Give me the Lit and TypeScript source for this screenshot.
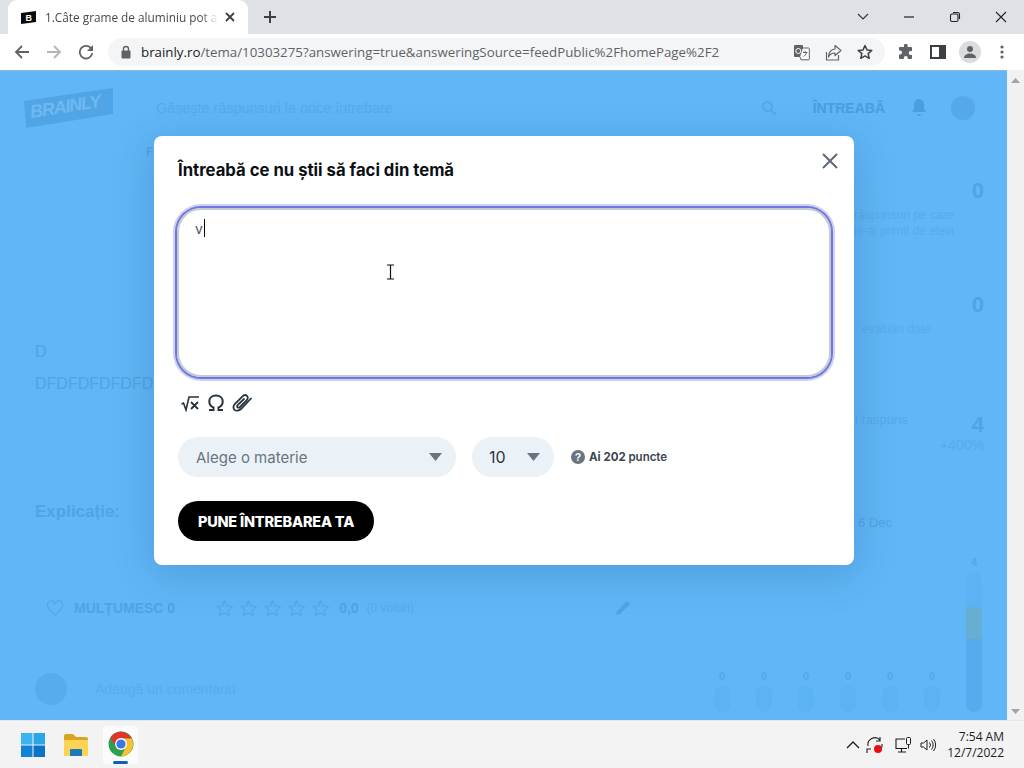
import { LitElement, html, css, svg } from "lit";
import { customElement } from "lit/decorators.js";

const chartCols = [
  { v: "0", h: 26, l: "Ma" },
  { v: "0", h: 26, l: "Jo" },
  { v: "0", h: 26, l: "Vi" },
  { v: "0", h: 26, l: "Sâ" },
  { v: "0", h: 26, l: "Du" },
  { v: "0", h: 26, l: "Lu" },
  { v: "4", h: 140, l: "Ma" },
];

const star = svg`<path d="M8 1l2.1 4.6 5 .6-3.7 3.4 1 5L8 12.1 3.600 14.600l1-5L.9 6.200l5-.6z" fill="none" stroke="currentColor" stroke-width="1.300"/>`;

@customElement("app-root")
export class AppRoot extends LitElement {
  static styles = css`
    :host { display: flex; flex-direction: column; width: 1024px; height: 768px; overflow: hidden; font-family: "Open Sans", "Liberation Sans", sans-serif; background: #fff; }
    svg { display: block; flex: none; }

    .strip { height: 34px; background: #dee1e6; display: flex; align-items: center; padding-left: 8px; flex: none; }
    .tab { width: 240px; height: 34px; background: #fff; border-radius: 9px 9px 0 0; display: flex; align-items: center; padding-left: 13px; box-sizing: border-box; flex: none; }
    .tabtitle { width: 173px; margin-left: 9px; font-size: 11.800px; color: #45494e; white-space: nowrap; overflow: hidden; -webkit-mask-image: linear-gradient(90deg, #000 90%, transparent); mask-image: linear-gradient(90deg, #000 90%, transparent); }
    .tabx { margin-left: 7px; }
    .newtab { margin-left: 15px; }
    .winctl { margin-left: auto; display: flex; align-items: center; margin-right: 17px; gap: 34px; }

    .bar { height: 36px; background: #fff; display: flex; align-items: center; padding-left: 14px; flex: none; }
    .nav { display: flex; align-items: center; gap: 16px; }
    .omni { margin-left: 14px; width: 777px; height: 28px; background: #f4f5f7; border-radius: 14px; display: flex; align-items: center; padding-left: 12px; box-sizing: border-box; flex: none; }
    .url { margin-left: 9px; font-size: 13.300px; color: #202124; white-space: nowrap; }
    .url span { color: #5f6368; }
    .omniicons { margin-left: auto; margin-right: 12px; display: flex; gap: 15px; align-items: center; }
    .tools { display: flex; align-items: center; margin-left: 13px; gap: 14px; }
    .panel { margin-left: 2px; }
    .userav { width: 22px; height: 22px; border-radius: 50%; background: #dadce0; display: flex; align-items: center; justify-content: center; margin-left: -1px; }
    .dots { margin-left: 5px; }

    .main { flex: 1; display: flex; min-height: 0; }
    .page { position: relative; flex: 1; background: #60b6f6; overflow: hidden; color: #4fa4e4; font-family: "Liberation Sans", sans-serif; border-top: 1px solid #8fb8d8; box-sizing: border-box; }
    .scroll { width: 17px; background: #f1f1f1; display: flex; flex-direction: column; justify-content: space-between; align-items: center; padding: 8px 0 6px; box-sizing: border-box; }

    .top { height: 73px; display: flex; align-items: center; padding-left: 24px; }
    .search { margin-left: 42px; font-size: 14.400px; color: #57abea; }
    .topright { margin-left: auto; display: flex; align-items: center; margin-right: 32px; }
    .ask { margin-left: 36px; font-size: 14px; font-weight: 700; color: #4a9edd; }
    .bell { margin-left: 26px; }
    .av { width: 24px; height: 24px; border-radius: 50%; background: #55a9ea; margin-left: 24px; }
    .sub { height: 16px; line-height: 16px; padding-left: 146px; font-size: 12px; font-weight: 700; }
    .cols { display: grid; grid-template-columns: 640px minmax(0, 1fr); }
    .left { padding-left: 35px; }
    .line { height: 32px; line-height: 32px; font-size: 16px; white-space: nowrap; }
    .line.first { margin-top: 176px; }
    .expl { margin-top: 100px; height: 24px; line-height: 24px; font-size: 17px; font-weight: 700; }
    .likes { margin-top: 72px; height: 24px; display: flex; align-items: center; padding-left: 11px; }
    .likes b { margin-left: 10px; font-size: 14px; }
    .stars { margin-left: 41px; display: flex; gap: 7px; color: #55a9e8; }
    .rate { margin-left: 10px; font-size: 14px; font-weight: 700; }
    .rate2 { margin-left: 8px; font-size: 12px; color: #57abe9; }
    .pencil { margin-left: auto; margin-right: 8px; }
    .comment { margin-top: 53px; height: 32px; display: flex; align-items: center; }
    .cav { width: 32px; height: 32px; border-radius: 50%; background: #57acec; }
    .ph { margin-left: 28px; font-size: 14px; color: #58acec; }

    .right { position: relative; padding-right: 23px; }
    .big { margin-top: 54px; height: 24px; line-height: 24px; text-align: right; font-size: 22px; font-weight: 700; }
    .big.f { margin-top: 19px; }
    .small { margin-top: 4px; padding-left: 214px; font-size: 12px; line-height: 16px; color: #58ace9; white-space: nowrap; }
    .small.ev { padding-left: 222px; }
    .statrow { margin-top: 76px; display: flex; justify-content: space-between; align-items: flex-end; height: 24px; padding-left: 215px; }
    .statrow span { font-size: 13px; line-height: 16px; margin-bottom: 9px; color: #55a9e6; }
    .statrow b { font-size: 22px; line-height: 24px; }
    .pct { margin-top: 0; text-align: right; font-size: 14px; line-height: 16px; color: #57abe8; }
    .date { margin-top: 62px; padding-left: 218px; font-size: 13px; line-height: 16px; }
    .chart { margin: 25px 0 0 61px; display: grid; grid-template-columns: repeat(7, 42px); height: 175px; align-items: end; justify-items: center; }
    .chartcol { display: flex; flex-direction: column; align-items: center; }
    .val { font-size: 11px; line-height: 12px; font-weight: 700; margin-bottom: 4px; color: #54a8e6; }
    .barv { width: 16px; background: #5cb3f3; border-radius: 8px; margin-bottom: 6px; }
    .barv.tall { background: linear-gradient(#5cb3f4 0 25%, #66aed2 25% 48%, #55abee 48%); }
    .lab { font-size: 11px; line-height: 14px; color: #55a9e6; }

    .modal { position: absolute; left: 154px; top: 65px; width: 700px; height: 429px; background: #fff; border-radius: 8px; box-shadow: 0 8px 40px rgba(20, 70, 120, .22); padding: 24px; box-sizing: border-box; font-family: Inter, "Liberation Sans", sans-serif; color: #000; }
    .mhead { display: flex; align-items: center; justify-content: space-between; height: 20px; }
    .mtitle { font-size: 16.700px; font-weight: 700; color: #0c1014; white-space: nowrap; }
    .mclose { margin-right: -8px; margin-top: -19px; }
    .ta { margin-top: 28px; margin-left: -1px; height: 169px; width: 654px; box-sizing: border-box; border: 2px solid #c3cbd1; border-radius: 24px; box-shadow: 0 0 0 2px #6f77de, 0 0 0 4px #cdd1f6; padding: 9px 16px; display: flex; align-items: flex-start; position: relative; }
    .typed { font-size: 14px; line-height: 20px; color: #4b5560; }
    .caret { width: 1px; height: 18px; background: #000; margin-left: 1px; }
    .ibeam { position: absolute; left: 207px; top: 54px; }
    .rte { margin-top: 16px; display: flex; align-items: center; gap: 8px; margin-left: 3px; height: 20px; }
    .form { margin-top: 24px; display: flex; align-items: center; height: 40px; }
    .sel { height: 40px; border-radius: 20px; background: #ebf2f7; display: flex; align-items: center; justify-content: space-between; box-sizing: border-box; padding: 0 14px 0 18px; font-size: 15px; color: #687480; }
    .sel.a { width: 278px; }
    .sel.b { width: 82px; margin-left: 16px; color: #2c3640; font-size: 16px; padding-left: 17px; }
    .help { margin-left: 17px; }
    .pts { margin-left: 4px; font-size: 11.500px; font-weight: 700; color: #3c454e; }
    .pts span { font-weight: 600; }
    .cta { margin-top: 24px; width: 196px; height: 40px; border-radius: 20px; background: #000; color: #fff; font-size: 14.500px; font-weight: 800; border: 0; padding: 0; font-family: inherit; display: block; letter-spacing: -.2px; white-space: nowrap; }

    .task { height: 48px; background: #f3f3f3; border-top: 1px solid #e6e7e8; box-sizing: border-box; display: flex; align-items: center; padding-left: 21px; flex: none; }
    .folder { margin-left: 19px; }
    .tile { margin-left: 15px; width: 35px; height: 38px; background: #fbfbfb; border-radius: 4px; display: flex; flex-direction: column; align-items: center; padding-top: 5px; box-sizing: border-box; position: relative; }
    .ind { width: 15px; height: 3px; border-radius: 2px; background: #0f62b0; margin-top: 4px; }
    .tray { margin-left: auto; display: flex; align-items: center; margin-right: 20px; }
    .sync { margin-left: 6px; }
    .net { margin-left: 11px; }
    .vol { margin-left: 8px; }
    .clock { margin-left: 10px; text-align: right; font-size: 12px; line-height: 16px; color: #1d1d1d; white-space: nowrap; }
  `;

  private chrome() {
    return html`<svg width="26" height="26" viewBox="0 0 48 48">
      <circle cx="24" cy="24" r="23" fill="#2e9e4f"/>
      <path d="M24 14L44 13.500A23 23 0 0 0 4.500 12L15 29z" fill="#e0362c"/>
      <path d="M24 14H44A23 23 0 0 1 24 47L33 29z" fill="#fbc02d"/>
      <circle cx="24" cy="24" r="11" fill="#fff"/><circle cx="24" cy="24" r="8.500" fill="#3a76e8"/>
    </svg>`;
  }

  render() {
    return html`
      <div class="strip">
        <div class="tab">
          <svg width="15" height="13" viewBox="0 0 15 13"><path d="M0 2L15 0v11L0 13z" fill="#0b0b0b"/><text x="4.500" y="10" font-size="9" font-weight="700" fill="#fff" font-family="Liberation Sans">B</text></svg>
          <div class="tabtitle">1.Câte grame de aluminiu pot arde</div>
          <svg class="tabx" width="10" height="10" viewBox="0 0 10 10"><path d="M1 1l8 8M9 1l-8 8" stroke="#3c4043" stroke-width="1.800"/></svg>
        </div>
        <svg class="newtab" width="14" height="14" viewBox="0 0 14 14"><path d="M7 1v12M1 7h12" stroke="#3c4043" stroke-width="2"/></svg>
        <div class="winctl">
          <svg width="12" height="8" viewBox="0 0 12 8"><path d="M1 1l5 5 5-5" fill="none" stroke="#333" stroke-width="1.100"/></svg>
          <svg width="12" height="12" viewBox="0 0 12 12"><path d="M1 6h10" stroke="#222" stroke-width="1.200"/></svg>
          <svg width="12" height="12" viewBox="0 0 12 12"><rect x="1.500" y="3" width="7.500" height="7.500" rx="1.500" fill="none" stroke="#222" stroke-width="1.100"/><path d="M4 1.500h4.500a2 2 0 0 1 2 2V8" fill="none" stroke="#222" stroke-width="1.100"/></svg>
          <svg width="12" height="12" viewBox="0 0 12 12"><path d="M1 1l10 10M11 1L1 11" stroke="#222" stroke-width="1.100"/></svg>
        </div>
      </div>

      <div class="bar">
        <div class="nav">
          <svg width="16" height="16" viewBox="0 0 16 16"><path d="M15 8H2M8 2L2 8l6 6" fill="none" stroke="#5f6368" stroke-width="1.800"/></svg>
          <svg width="16" height="16" viewBox="0 0 16 16"><path d="M1 8h13M8 2l6 6-6 6" fill="none" stroke="#b3b6ba" stroke-width="1.800"/></svg>
          <svg width="16" height="16" viewBox="0 0 16 16"><path d="M13.500 5A6.300 6.300 0 1 0 14.300 9" fill="none" stroke="#5f6368" stroke-width="1.800"/><path d="M15 1v6H9z" fill="#5f6368"/></svg>
        </div>
        <div class="omni">
          <svg width="12" height="14" viewBox="0 0 12 14"><path d="M3.500 6V4a2.500 2.500 0 0 1 5 0v2" fill="none" stroke="#5f6368" stroke-width="1.400"/><rect x="1.500" y="5.500" width="9" height="8" rx="1" fill="#5f6368"/></svg>
          <div class="url">brainly.ro<span>/tema/10303275?answering=true&answeringSource=feedPublic%2FhomePage%2F2</span></div>
          <div class="omniicons">
            <svg width="17" height="17" viewBox="0 0 17 17"><rect x="1" y="1" width="9" height="12" rx="1" fill="#5f6368"/><path d="M10 4h5.500a.8.8 0 0 1 .8.800V15a.8.8 0 0 1-.8.8H8L7 13" fill="#fff" stroke="#5f6368"/><circle cx="5.300" cy="7" r="2.500" fill="none" stroke="#fff"/><path d="M10 8.500h4.500M12.200 7v1.500M13.500 8.500c-.5 2-2 3.500-3 4" fill="none" stroke="#5f6368"/></svg>
            <svg width="17" height="17" viewBox="0 0 17 17"><path d="M1.500 8v8h12v-5" fill="none" stroke="#5f6368" stroke-width="1.200"/><path d="M10 1.500l6 5-6 5V9C7 9 5 10 3.500 13c.3-4.500 2.500-7.500 6.500-8z" fill="none" stroke="#5f6368" stroke-width="1.200" stroke-linejoin="round"/></svg>
            <svg width="16" height="16" viewBox="0 0 16 16"><path d="M8 1.500l2 4.400 4.800.5-3.600 3.200 1 4.700L8 11.900l-4.200 2.400 1-4.700L1.200 6.400 6 5.900z" fill="none" stroke="#3c4043" stroke-width="1.500" stroke-linejoin="round"/></svg>
          </div>
        </div>
        <div class="tools">
          <svg width="16" height="16" viewBox="0 0 16 16"><path d="M6 1.500a1.800 1.800 0 0 1 3.600 0V3h3.400a1 1 0 0 1 1 1v3h-1.300a2 2 0 0 0 0 4H14v3a1 1 0 0 1-1 1H9.800v-1a2 2 0 0 0-4 0v1H2a1 1 0 0 1-1-1v-3.500h1a2 2 0 0 0 0-4H1V4a1 1 0 0 1 1-1h4z" fill="#5f6368"/></svg>
          <svg class="panel" width="16" height="14" viewBox="0 0 16 14"><rect x="1" y="1" width="14" height="12" fill="none" stroke="#3c4043" stroke-width="2"/><rect x="9" y="1" width="6" height="12" fill="#3c4043"/></svg>
          <div class="userav"><svg width="14" height="14" viewBox="0 0 14 14"><circle cx="7" cy="4" r="3" fill="#5f6368"/><path d="M1 13c0-3 3-4.500 6-4.500s6 1.500 6 4.500z" fill="#5f6368"/></svg></div>
          <svg class="dots" width="4" height="14" viewBox="0 0 4 14"><circle cx="2" cy="2" r="1.600" fill="#5f6368"/><circle cx="2" cy="7" r="1.600" fill="#5f6368"/><circle cx="2" cy="12" r="1.600" fill="#5f6368"/></svg>
        </div>
      </div>

      <div class="main">
        <div class="page">
          <div class="top">
            <svg width="90" height="40" viewBox="0 0 90 40"><path d="M0 13L89 0l0 26L2 40z" fill="#50a5e6"/><text x="7" y="30" transform="rotate(-9 7 30)" font-size="18" font-weight="700" font-style="italic" fill="#6fb9f1" font-family="Liberation Sans" textLength="72">BRAINLY</text></svg>
            <div class="search">Găsește răspunsuri la orice întrebare</div>
            <div class="topright">
              <svg width="16" height="16" viewBox="0 0 16 16"><circle cx="6.500" cy="6.500" r="4.500" fill="none" stroke="#55a9e8" stroke-width="2"/><path d="M10 10l4.500 4.500" stroke="#55a9e8" stroke-width="2"/></svg>
              <div class="ask">ÎNTREABĂ</div>
              <svg class="bell" width="16" height="20" viewBox="0 0 16 20"><path d="M8 1c3.500 0 5 3 5 6v4l2 3H1l2-3V7c0-3 1.500-6 5-6z" fill="#4a9edd"/><path d="M6 16h4a2 2 0 0 1-4 0z" fill="#4a9edd"/></svg>
              <div class="av"></div>
            </div>
          </div>
          <div class="sub">F</div>
          <div class="cols">
            <div class="left">
              <div class="line first">D</div>
              <div class="line">DFDFDFDFDFDFDFDF</div>
              <div class="expl">Explicație:</div>
              <div class="likes">
                <svg width="18" height="18" viewBox="0 0 18 18"><path d="M9 16C4 12 1.500 9.500 1.500 6.300A3.800 3.800 0 0 1 9 5a3.800 3.800 0 0 1 7.500 1.300C16.500 9.500 14 12 9 16z" fill="none" stroke="#55a9e8" stroke-width="1.500"/></svg>
                <b>MULȚUMESC 0</b>
                <div class="stars">
                  ${[0, 1, 2, 3, 4].map(() => html`<svg width="17" height="17" viewBox="0 0 16 16">${star}</svg>`)}
                </div>
                <div class="rate">0,0</div><div class="rate2">(0 voturi)</div>
                <svg class="pencil" width="18" height="18" viewBox="0 0 18 18"><path d="M2 16l1-4L13 2l3 3L6 15z" fill="#4fa4e4"/></svg>
              </div>
              <div class="comment"><div class="cav"></div><div class="ph">Adaugă un comentariu</div></div>
            </div>
            <div class="right">
              <div class="big f">0</div>
              <div class="small">răspunsuri pe care<br />le-ai primit de elevi</div>
              <div class="big">0</div>
              <div class="small ev">evaluări date</div>
              <div class="statrow"><span>l raspuns</span><b>4</b></div>
              <div class="pct">+400%</div>
              <div class="date">6 Dec</div>
              <div class="chart">
                ${chartCols.map(
                  (c) => html`<div class="chartcol">
                    <div class="val">${c.v}</div>
                    <div class="barv ${c.h > 100 ? "tall" : ""}" style="height:${c.h}px"></div>
                    <div class="lab">${c.l}</div>
                  </div>`
                )}
              </div>
            </div>
          </div>

          <div class="modal">
            <div class="mhead">
              <div class="mtitle">Întreabă ce nu știi să faci din temă</div>
              <svg class="mclose" width="16" height="16" viewBox="0 0 16 16"><path d="M1 1l14 14M15 1L1 15" stroke="#5d6a75" stroke-width="2"/></svg>
            </div>
            <div class="ta">
              <span class="typed">v</span><span class="caret"></span>
              <svg class="ibeam" width="9" height="16" viewBox="0 0 9 16"><path d="M1 1h7M1 15h7M4.500 1v14" fill="none" stroke="#111" stroke-width="1.200"/></svg>
            </div>
            <div class="rte">
              <svg width="19" height="18" viewBox="0 0 19 18"><path d="M0.500 10l2-1 2.500 7L8 3h10" fill="none" stroke="#29333d" stroke-width="1.600"/><path d="M10 8l7 7M17 8l-7 7" stroke="#29333d" stroke-width="1.800"/></svg>
              <svg width="16" height="18" viewBox="0 0 16 18"><path d="M1 16h4.500v-2.500C3 12.500 1.300 10.300 1.300 7.500 1.300 4 4 1.500 8 1.500s6.700 2.500 6.700 6c0 2.800-1.700 5-4.200 6V16H15" fill="none" stroke="#29333d" stroke-width="2"/></svg>
              <svg width="21" height="19" viewBox="0 0 21 19"><path d="M19 4.500L9 15c-2 2-5 2.200-6.500.8S1 11.800 3 9.800L10.500 2.300c1.500-1.500 3.300-1.600 4.500-.5s1.100 3-.4 4.500L8 13c-.8.800-1.900.9-2.500.3s-.5-1.700.3-2.500L12 5" fill="none" stroke="#29333d" stroke-width="1.800" stroke-linecap="round"/></svg>
            </div>
            <div class="form">
              <div class="sel a">Alege o materie
                <svg width="13" height="8" viewBox="0 0 13 8"><path d="M0 0h13L6.500 8z" fill="#687480"/></svg>
              </div>
              <div class="sel b">10
                <svg width="13" height="8" viewBox="0 0 13 8"><path d="M0 0h13L6.500 8z" fill="#687480"/></svg>
              </div>
              <svg class="help" width="14" height="14" viewBox="0 0 14 14"><circle cx="7" cy="7" r="7" fill="#687480"/><text x="7" y="11" text-anchor="middle" font-size="10.500" font-weight="700" fill="#fff" font-family="Liberation Sans">?</text></svg>
              <div class="pts">Ai 202 <span>puncte</span></div>
            </div>
            <button class="cta">PUNE ÎNTREBAREA TA</button>
          </div>
        </div>
        <div class="scroll">
          <svg width="9" height="5" viewBox="0 0 9 5"><path d="M0 5l4.500-5L9 5z" fill="#a3a3a3"/></svg>
          <svg width="9" height="5" viewBox="0 0 9 5"><path d="M0 0l4.500 5L9 0z" fill="#a3a3a3"/></svg>
        </div>
      </div>

      <div class="task">
        <svg width="24" height="24" viewBox="0 0 24 24">
          <rect x="0" y="0" width="11.500" height="11.500" fill="#3cb4ee"/><rect x="12.500" y="0" width="11.500" height="11.500" fill="#2aa6e8"/>
          <rect x="0" y="12.500" width="11.500" height="11.500" fill="#0f83d8"/><rect x="12.500" y="12.500" width="11.500" height="11.500" fill="#0a72c8"/>
        </svg>
        <svg class="folder" width="24" height="22" viewBox="0 0 24 22">
          <path d="M0 2a2 2 0 0 1 2-2h7l3 3h10a2 2 0 0 1 2 2v15a2 2 0 0 1-2 2H2a2 2 0 0 1-2-2z" fill="#d8a520"/>
          <path d="M0 6h24v14a2 2 0 0 1-2 2H2a2 2 0 0 1-2-2z" fill="#fcd353"/>
          <path d="M7 15h10a1 1 0 0 1 1 1v6H6v-6a1 1 0 0 1 1-1z" fill="#1f78b8"/>
        </svg>
        <div class="tile">${this.chrome()}<div class="ind"></div></div>
        <div class="tray">
          <svg width="14" height="8" viewBox="0 0 14 8"><path d="M1 7l6-6 6 6" fill="none" stroke="#1d1d1d" stroke-width="1.300"/></svg>
          <svg class="sync" width="18" height="18" viewBox="0 0 18 18"><path d="M2 10a7 7 0 0 1 12-6M16 8a7 7 0 0 1-2 6" fill="none" stroke="#1d1d1d" stroke-width="1.100"/><path d="M14 1v4h-4" fill="none" stroke="#1d1d1d" stroke-width="1.100"/><path d="M1 17v-4h4" fill="none" stroke="#1d1d1d" stroke-width="1.100"/><circle cx="12" cy="13" r="4" fill="#e81010"/></svg>
          <svg class="net" width="17" height="16" viewBox="0 0 17 16"><path d="M12 11.500H1V2h9M3 15h8M6.500 11.500V15" fill="none" stroke="#1d1d1d" stroke-width="1.100"/><rect x="11.500" y="0.500" width="4" height="7" rx="1" fill="none" stroke="#1d1d1d"/><path d="M13.500 7.500v4" stroke="#1d1d1d"/></svg>
          <svg class="vol" width="17" height="14" viewBox="0 0 17 14"><path d="M1 5h2.500L7 2v10L3.500 9H1z" fill="none" stroke="#1d1d1d"/><path d="M9.500 4.500a4 4 0 0 1 0 5M11.500 2.500a7 7 0 0 1 0 9M13.500 1a9.500 9.500 0 0 1 0 12" fill="none" stroke="#1d1d1d"/></svg>
          <div class="clock">7:54 AM<br />12/7/2022</div>
        </div>
      </div>
    `;
  }
}
